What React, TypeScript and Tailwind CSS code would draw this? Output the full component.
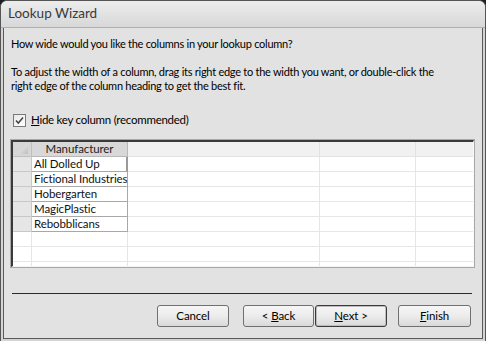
import React from "react";

const font = { fontFamily: 'Lato, "Noto Sans", sans-serif' };

function Btn({ children, def }: { children: React.ReactNode; def?: boolean }) {
  return (
    <div
      className={`flex items-center justify-center h-[22px] rounded-[3px] bg-gradient-to-b from-[#f6f6f6] via-[#ececec] to-[#d9d9d9] text-[11.5px] tracking-[-0.1px] text-[#000] ${
        def ? "border border-[#3a3a3a] shadow-[inset_0_0_0_1px_#bdbdbd]" : "border border-[#707070]"
      }`}
    >
      <span className="whitespace-pre">{children}</span>
    </div>
  );
}

const rows = ["All Dolled Up", "Fictional Industries", "Hobergarten", "MagicPlastic", "Rebobblicans"];

export default function App() {
  const emptyRows = [0, 1, 2, 3];
  return (
    <div className="w-[486px] h-[341px] bg-[#1e1e1e]" style={font}>
      <div className="w-full h-full flex flex-col rounded-t-[7px] bg-[#d4d4d4] border-t border-x border-[#555] overflow-hidden">
        {/* title bar */}
        <div className="h-[27px] shrink-0 flex items-center pl-[7px] bg-gradient-to-b from-[#ededed] via-[#e2e2e2] to-[#d8d8d8] border-b border-[#b0b0b0]">
          <span className="text-[13.5px] text-[#3a3a3a] leading-none">Lookup Wizard</span>
        </div>
        {/* body */}
        <div className="flex-1 flex flex-col mx-[2px] mb-[2px] border-l border-r border-b border-[#5a5a5a] bg-[#e2e2e2] pl-[7px] pr-[9px] text-[11px] tracking-[-0.26px] text-[#000]">
          <div className="mt-[9px] leading-[14px] whitespace-nowrap">How wide would you like the columns in your lookup column?</div>
          <div className="mt-[14px] leading-[14px] whitespace-nowrap">
            To adjust the width of a column, drag its right edge to the width you want, or double-click the
            <br />
            right edge of the column heading to get the best fit.
          </div>
          <div className="mt-[20px] flex items-center h-[14px]">
            <div className="ml-[2px] w-[13px] h-[13px] border border-[#7a7a7a] bg-gradient-to-br from-[#e8e8e8] to-[#ffffff] flex items-center justify-center">
              <svg width="9" height="9" viewBox="0 0 9 9">
                <path d="M1 4.5 L3.3 7 L8 1.5" fill="none" stroke="#444" strokeWidth="1.5" />
              </svg>
            </div>
            <span className="ml-[5px] text-[11.5px]">
              <u>H</u>ide key column (recommended)
            </span>
          </div>
          {/* grid */}
          <div className="mt-[13px] w-[463px] h-[127px] border-t-2 border-l-2 border-t-[#3a3a3a] border-l-[#3a3a3a] border-r border-b border-r-[#fafafa] border-b-[#f4f4f4] bg-white overflow-hidden shadow-[0_0_0_1px_#a8a8a8]">
            <div className="grid grid-cols-[19px_96px_192px_96px_1fr] text-[11.5px] tracking-[-0.1px] leading-[14px]">
              {/* header */}
              <div className="h-[15px] bg-[#d6d6d6] border-r border-b border-[#c0c0c0] relative">
                <svg className="absolute left-[3px] top-[1px]" width="12" height="11" viewBox="0 0 12 11">
                  <defs>
                    <linearGradient id="tg" x1="0" y1="0" x2="1" y2="1">
                      <stop offset="0" stopColor="#fbfbfb" />
                      <stop offset="1" stopColor="#bdbdbd" />
                    </linearGradient>
                  </defs>
                  <polygon points="12,0 12,11 1,11" fill="url(#tg)" />
                </svg>
              </div>
              <div className="h-[15px] bg-[#d8d8d8] border-r border-b border-[#b8b8b8] text-center text-[#222]">Manufacturer</div>
              <div className="h-[15px] bg-[#f1f1f1] border-r border-b border-[#e2e2e2]" />
              <div className="h-[15px] bg-[#f1f1f1] border-r border-b border-[#e2e2e2]" />
              <div className="h-[15px] bg-[#f1f1f1] border-b border-[#e2e2e2]" />
              {rows.map((r, i) => (
                <React.Fragment key={r}>
                  <div className="h-[15px] bg-[#e6e6e6] border-r border-b border-[#c8c8c8]" />
                  <div
                    className={`h-[15px] bg-white border-b border-[#a8a8a8] pl-[2px] whitespace-nowrap overflow-hidden text-[#111] ${
                      i === 0 ? "border-r-2 border-r-[#9a9a9a]" : "border-r border-r-[#a8a8a8]"
                    }`}
                  >
                    {r}
                  </div>
                  <div className="h-[15px] bg-white border-r border-b border-[#e6e6e6]" />
                  <div className="h-[15px] bg-white border-r border-b border-[#e6e6e6]" />
                  <div className="h-[15px] bg-white border-b border-[#e6e6e6]" />
                </React.Fragment>
              ))}
              {emptyRows.map((k) => (
                <React.Fragment key={k}>
                  <div className="h-[15px] bg-white border-r border-b border-[#e6e6e6]" />
                  <div className="h-[15px] bg-white border-r border-b border-[#e6e6e6]" />
                  <div className="h-[15px] bg-white border-r border-b border-[#e6e6e6]" />
                  <div className="h-[15px] bg-white border-r border-b border-[#e6e6e6]" />
                  <div className="h-[15px] bg-white border-b border-[#e6e6e6]" />
                </React.Fragment>
              ))}
            </div>
          </div>
          {/* separator */}
          <div className="mt-[26px] ml-[1px] w-[460px] h-px bg-[#2a2a2a]" />
          {/* buttons */}
          <div className="mt-[11px] flex">
            <div className="ml-[146px] w-[72px]">
              <Btn>Cancel</Btn>
            </div>
            <div className="ml-[14px] w-[71px]">
              <Btn>
                {"< "}
                <u>B</u>ack
              </Btn>
            </div>
            <div className="ml-[1px] w-[72px]">
              <Btn def>
                <u>N</u>
                {"ext >"}
              </Btn>
            </div>
            <div className="ml-[11px] w-[73px]">
              <Btn>
                <u>F</u>inish
              </Btn>
            </div>
          </div>
        </div>
      </div>
    </div>
  );
}
